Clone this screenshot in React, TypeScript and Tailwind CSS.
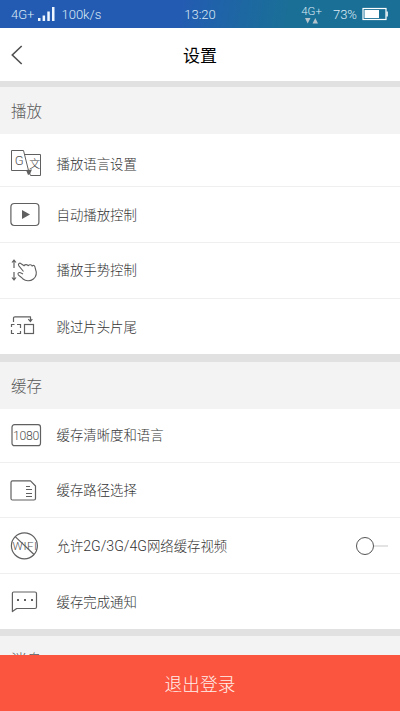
import type { ReactNode } from "react";

const cjk = "font-['Noto_Sans_CJK_SC',sans-serif]";
const latin = "font-['Roboto','Noto_Sans_CJK_SC',sans-serif]";

function Icon({ children }: { children: ReactNode }) {
  return (
    <svg
      width="32"
      height="32"
      viewBox="0 0 32 32"
      fill="none"
      stroke="#606060"
      strokeWidth="1.2"
      strokeLinejoin="round"
      className={`shrink-0 font-light ${latin}`}
    >
      {children}
    </svg>
  );
}

const LanguageIcon = () => (
  <Icon>
    <path d="M1.5 3.5H13.5L18.5 23.5H1.5Z" strokeWidth="1" />
    <path d="M14.5 7.5H30.5V28.5H20.5L18.5 23.5" strokeWidth="1" />
    <path d="M16 23L22 22.5L20 27L18 28Z" fill="#606060" stroke="none" />
    <text x="9.3" y="17.6" fontSize="13" textAnchor="middle" fill="#505050" stroke="none">G</text>
    <text x="24.8" y="20.6" fontSize="11" textAnchor="middle" fill="#404040" stroke="none">文</text>
  </Icon>
);

const PlayIcon = () => (
  <Icon>
    <rect x="0.9" y="4.5" width="28" height="22" rx="3.5" />
    <path d="M12 11L20 15.5L12 20Z" fill="#606060" stroke="none" />
  </Icon>
);

const GestureIcon = () => (
  <Icon>
    <path d="M4 5V13M4 17V25M2 7.5L4 5L6 7.5M2 22.5L4 25L6 22.5" />
    <path
      strokeWidth="1.1"
      d="M13.5 16.5L8.7 10.6C7.8 8.8 9.6 7.4 11.1 8.7L14.1 10.8C14.8 9.2 17.6 9.3 18.2 10.8C19.2 9.3 21.6 9.5 22.1 11C23.8 9.3 25 11 25.3 13.5C26.9 17.6 26.6 21.5 23.4 24C20 26.6 15.5 26 13 24C11.8 22.3 9.8 21.3 8.3 19.8C7.3 18.2 8.8 17.1 10.5 17.8L13 18.9"
    />
  </Icon>
);

const SkipIcon = () => (
  <Icon>
    <path d="M3.5 10V5.8Q3.5 4.8 5 4.8H20.5V9.5M18.3 7.2L20.5 9.5L22.3 7" />
    <path strokeLinejoin="miter" d="M4.5 12.5H1.5V15M1.5 18V21.5H4M7 21.5H10.5V19M10.5 16V12.5H7" />
    <rect x="14.5" y="12.5" width="9" height="9" strokeLinejoin="miter" />
  </Icon>
);

const QualityIcon = () => (
  <Icon>
    <rect x="2" y="4.7" width="28.5" height="21" rx="2.5" />
    <text
      x="16.2"
      y="19.6"
      fontSize="12.3"
      textLength="26.5"
      textAnchor="middle"
      fill="#505050"
      stroke="none"
    >
      1080
    </text>
  </Icon>
);

const StorageIcon = () => (
  <Icon>
    <path d="M2.5 5.9H20.5L25.5 11V23.5Q25.5 25 24 25H2.5Q1 25 1 23.5V7.5Q1 5.9 2.5 5.9Z" />
    <path d="M16 11.5H20M16 14.5H22M16 18.5H22M16 21.5H22" />
  </Icon>
);

const WifiOffIcon = () => (
  <Icon>
    <circle cx="14.4" cy="15.8" r="13" />
    <text
      x="14.8"
      y="19.8"
      fontSize="11.5"
      textLength="24.5"
      textAnchor="middle"
      fill="#505050"
      stroke="none"
    >
      WIFI
    </text>
    <path d="M5.2 6.6L24 24.5" />
  </Icon>
);

const MessageIcon = () => (
  <Icon>
    <path d="M3.6 5H25Q26.5 5 26.5 6.5V20Q26.5 21.5 25 21.5H6.7L2.4 24.6V6.3Q2.4 5 3.6 5Z" />
    <path d="M7 13H9M14 13H16M21 13H23" strokeWidth="1.8" />
  </Icon>
);

function SectionTitle({ title }: { title: string }) {
  return (
    <h2
      className={`flex h-[47px] shrink-0 items-center bg-[#f3f3f3] pl-[11px] text-[15.5px] font-light text-[#585858] ${cjk}`}
    >
      {title}
    </h2>
  );
}

function Row({
  icon,
  text,
  height,
  textClass = "",
  last = false,
  children,
}: {
  icon: ReactNode;
  text: ReactNode;
  height: string;
  textClass?: string;
  last?: boolean;
  children?: ReactNode;
}) {
  return (
    <div
      className={`flex shrink-0 items-center pr-3 pl-2.5 ${height} ${last ? "" : "border-b border-[#efefef]"}`}
    >
      {icon}
      <span
        className={`ml-[14.5px] flex-1 text-[13.4px] leading-5 font-light whitespace-nowrap text-[#333] ${latin} ${textClass}`}
      >
        {text}
      </span>
      {children}
    </div>
  );
}

function StatusBar() {
  return (
    <div
      className={`grid h-7 shrink-0 grid-cols-3 items-center bg-linear-100 from-[#235bb2] from-45% to-[#1a6f96] to-72% text-[13px] font-light text-[#dceaf5] ${latin}`}
    >
      <div className="flex items-center pt-px pl-[11px]">
        <span>4G+</span>
        <svg width="17" height="14" viewBox="0 0 17 14" fill="#eef6ff" className="mb-0.5 ml-1">
          <path d="M0 11h2.5v3H0zM4.6 8.5h2.5V14H4.6zM9.3 4.5h2.5V14H9.3zM14 0h2.5v14H14z" />
        </svg>
        <span className="ml-1.5">100k/s</span>
      </div>
      <span className="pt-px text-center">13:20</span>
      <div className="flex h-7 items-center justify-end pr-3">
        <div className="mr-[11px] flex flex-col items-center">
          <span className="text-[11.5px] leading-[13px]">4G+</span>
          <svg width="14" height="6" viewBox="0 0 14 6" fill="#b4c3cc">
            <path d="M0 0H5.5L2.7 5.5ZM7.5 5.5H13L10.3 0Z" />
          </svg>
        </div>
        <span className="pt-px text-[13px]">73%</span>
        <svg width="26" height="14" viewBox="0 0 26 14" className="ml-[5px]">
          <rect x="1" y="1.5" width="23" height="11" fill="none" stroke="#fff" strokeWidth="1.2" />
          <path d="M2.5 3H17V11H2.5Z" fill="#fff" />
          <path d="M24.4 4.5h1.4v5h-1.4z" fill="#fff" />
        </svg>
      </div>
    </div>
  );
}

export default function App() {
  return (
    <div className="flex h-[711px] w-[400px] flex-col overflow-hidden bg-white">
      <StatusBar />
      <header className="grid h-[53px] shrink-0 grid-cols-3 items-center">
        <button aria-label="返回" className="pl-[11px]">
          <svg width="13" height="20" viewBox="0 0 13 20" fill="none" stroke="#505050" strokeWidth="1.6">
            <path d="M10.7 1L1.3 10L10.7 19" />
          </svg>
        </button>
        <h1 className={`text-center text-[17px] text-black ${cjk}`}>设置</h1>
      </header>
      <main className="flex min-h-0 flex-1 flex-col overflow-hidden">
        <div className="h-1.5 shrink-0 bg-[#e1e1e1]" />
        <SectionTitle title="播放" />
        <Row icon={<LanguageIcon />} text="播放语言设置" height="h-[53px] pt-[6px]" textClass="pt-[3px]" />
        <Row icon={<PlayIcon />} text="自动播放控制" height="h-14" textClass="pt-0.5" />
        <Row icon={<GestureIcon />} text="播放手势控制" height="h-14" />
        <Row icon={<SkipIcon />} text="跳过片头片尾" height="h-[55px] pt-0.5" last />
        <div className="h-2 shrink-0 bg-[#e1e1e1]" />
        <SectionTitle title="缓存" />
        <Row icon={<QualityIcon />} text="缓存清晰度和语言" height="h-[54px]" />
        <Row icon={<StorageIcon />} text="缓存路径选择" height="h-[55px] pt-px" />
        <Row
          icon={<WifiOffIcon />}
          text={
            <>
              允许<span className="text-[14.1px]">2G/3G/4G</span>网络缓存视频
            </>
          }
          height="h-14 pt-px"
        >
          <button role="switch" aria-checked="false" aria-label="允许移动网络缓存" className="flex items-center">
            <span className="size-[18px] rounded-full border-[1.5px] border-[#555] bg-white" />
            <span className="h-0.5 w-3.5 bg-[#e3e3e3]" />
          </button>
        </Row>
        <Row icon={<MessageIcon />} text="缓存完成通知" height="h-[55px] pt-0.5" last />
        <div className="h-[7px] shrink-0 bg-[#e1e1e1]" />
        <SectionTitle title="消息" />
      </main>
      <button
        className={`h-14 shrink-0 bg-[#fb553f] text-[17.7px] font-light text-[#fff0ec] ${cjk}`}
      >
        退出登录
      </button>
    </div>
  );
}
